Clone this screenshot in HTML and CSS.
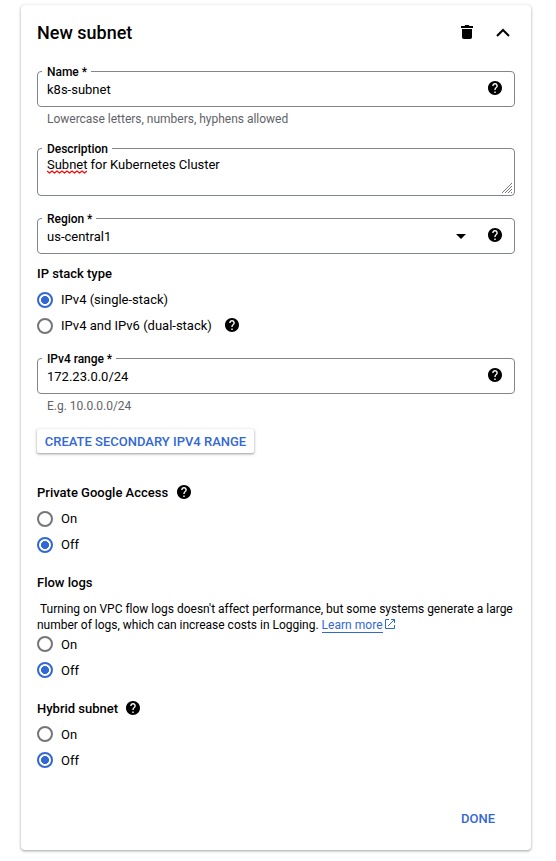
FILE: index.html
```html
<!DOCTYPE html>
<html lang="en">
<head>
<meta charset="utf-8">
<title>New subnet</title>
<link rel="stylesheet" href="styles.css">
</head>
<body>
<svg class="defs" width="0" height="0" aria-hidden="true">
  <symbol id="help" viewBox="2 2 20 20"><path d="M12 2C6.480 2 2 6.480 2 12s4.480 10 10 10 10-4.480 10-10S17.520 2 12 2zm1 17h-2v-2h2v2zm2.070-7.750l-.9.920C13.450 12.900 13 13.500 13 15h-2v-.5c0-1.100.45-2.100 1.170-2.830l1.240-1.260c.37-.36.59-.86.59-1.410 0-1.100-.9-2-2-2s-2 .9-2 2H8c0-2.210 1.790-4 4-4s4 1.790 4 4c0 .88-.36 1.680-.93 2.250z"/></symbol>
</svg>
<main class="card">
  <header class="header">
    <h1 class="title">New subnet</h1>
    <svg class="trash" width="12" height="14" viewBox="0 0 12 14"><path d="M1 4h10v8.200a1.800 1.800 0 0 1-1.800 1.800H2.800A1.800 1.800 0 0 1 1 12.200zM0 1h3.500l.8-1h3.400l.8 1H12v2H0z"/></svg>
    <svg class="chevron" width="14" height="9" viewBox="0 0 14 9"><path d="M1 8l6-6 6 6" fill="none" stroke="#000" stroke-width="2"/></svg>
  </header>

  <div class="field">
    <span class="label">Name *</span>
    <span class="value">k8s-subnet</span>
    <svg class="help"><use href="#help"/></svg>
  </div>
  <p class="hint">Lowercase letters, numbers, hyphens allowed</p>

  <div class="field area">
    <span class="label">Description</span>
    <span class="value"><span class="misspelled">Subnet<svg class="squiggle" width="40" height="4" viewBox="0 0 40 4"><path d="M0 1l2.500 2L5 1l2.500 2L10 1l2.500 2L15 1l2.500 2L20 1l2.500 2L25 1l2.500 2L30 1l2.500 2L35 1l2.500 2L40 1" fill="none" stroke="#f00" stroke-width="1.300"/></svg></span> for Kubernetes Cluster</span>
    <svg class="grip" width="10" height="10" viewBox="0 0 10 10"><path d="M0 10L10 0M3 10l7-7M6 10l4-4M9 10l1-1" stroke="#666" stroke-width=".9"/></svg>
  </div>

  <div class="field region">
    <span class="label">Region *</span>
    <span class="value">us-central1</span>
    <svg class="caret" width="10" height="5" viewBox="0 0 10 5"><path d="M0 0h10L5 5z"/></svg>
    <svg class="help"><use href="#help"/></svg>
  </div>

  <h2 class="heading stack-heading">IP stack type</h2>
  <div class="radios stack-radios">
    <div class="option"><i class="radio on"></i>IPv4 (single-stack)</div>
    <div class="option"><i class="radio"></i>IPv4 and IPv6 (dual-stack)<svg class="help"><use href="#help"/></svg></div>
  </div>

  <div class="field range">
    <span class="label">IPv4 range *</span>
    <span class="value">172.23.0.0/24</span>
    <svg class="help"><use href="#help"/></svg>
  </div>
  <p class="hint">E.g. 10.0.0.0/24</p>
  <button class="create">CREATE SECONDARY IPV4 RANGE</button>

  <h2 class="heading access-heading">Private Google Access<svg class="help"><use href="#help"/></svg></h2>
  <div class="radios access-radios">
    <div class="option"><i class="radio"></i>On</div>
    <div class="option"><i class="radio on"></i>Off</div>
  </div>

  <h2 class="heading logs-heading">Flow logs</h2>
  <p class="note">&nbsp;Turning on VPC flow logs doesn't affect performance, but some systems generate a large<br>number of logs, which can increase costs in Logging. <a class="link">Learn more</a><svg class="external" width="10" height="10" viewBox="0 0 10 10"><path d="M4 .5H.5v9h9V6M6 .5h3.500V4M9.500.5L3 7" fill="none" stroke="#3367d6"/></svg></p>
  <div class="radios logs-radios">
    <div class="option"><i class="radio"></i>On</div>
    <div class="option"><i class="radio on"></i>Off</div>
  </div>

  <h2 class="heading hybrid-heading">Hybrid subnet<svg class="help"><use href="#help"/></svg></h2>
  <div class="radios hybrid-radios">
    <div class="option"><i class="radio"></i>On</div>
    <div class="option"><i class="radio on"></i>Off</div>
  </div>

  <footer class="footer"><button class="done">DONE</button></footer>
</main>
</body>
</html>
```
FILE: styles.css
```css
* { box-sizing: border-box; }
body {
  margin: 0;
  padding: 5px 25px 0 21px;
  min-height: 861px;
  background: #fff;
  color: #000;
  font: 400 13px/20px Roboto, sans-serif;
}
h1, h2, p { margin: 0; }
svg { flex: none; }
button {
  border: 0;
  background: #fff;
  color: #3367d6;
  font: 500 13px/20px Roboto, sans-serif;
}
.defs { position: absolute; }
.card {
  display: flex;
  flex-direction: column;
  height: 845px;
  padding: 0 16px;
  border-radius: 4px;
  box-shadow: 0 1px 2px rgba(60, 64, 67, .3), 0 1px 3px 1px rgba(60, 64, 67, .15);
}
.header {
  display: flex;
  align-items: center;
  height: 56px;
}
.title {
  font-size: 18px;
  line-height: 24px;
  font-weight: 500;
  flex: 1;
}
.trash { margin-top: -2px; }
.chevron { margin: -1px 5px 0 23px; }
.help { width: 14px; height: 14px; }
.field {
  position: relative;
  display: flex;
  align-items: center;
  flex: none;
  height: 36px;
  margin-top: 10px;
  padding: 0 12px 0 9px;
  border: 1px solid #80868b;
  border-radius: 4px;
}
.field .help { margin-top: -2px; }
.label {
  position: absolute;
  top: -8px;
  left: 4px;
  padding: 0 4px 0 5px;
  background: #fff;
  font-size: 12px;
  line-height: 16px;
  font-weight: 500;
  letter-spacing: -.04px;
}
.value {
  flex: 1;
  padding-top: 2px;
}
.hint {
  margin: 4px 0 0 10px;
  color: #5f6368;
  font-size: 12px;
  line-height: 16px;
  letter-spacing: -.012px;
}
.area {
  height: 48px;
  margin-top: 21px;
  padding: 6px 2px 2px 9px;
  align-items: flex-start;
}
.area .value {
  padding-top: 0;
  letter-spacing: -.02px;
}
.grip { align-self: flex-end; }
.misspelled { position: relative; }
.squiggle {
  position: absolute;
  left: 0;
  bottom: -2px;
}
.region { margin-top: 22px; }
.caret { margin: 0 22px 0 0; }
.heading {
  display: flex;
  align-items: center;
  height: 20px;
  font-size: 13px;
  font-weight: 500;
}
.heading .help { margin: -2px 0 0 9px; }
.stack-heading { margin-top: 10px; }
.stack-radios { margin-top: 3px; }
.option {
  display: flex;
  align-items: center;
  height: 26px;
}
.option .help { margin: -2px 0 0 13px; }
.radio {
  flex: none;
  width: 16px;
  height: 16px;
  margin-right: 8px;
  border: 2px solid #757575;
  border-radius: 50%;
}
.radio.on {
  border-color: #3367d6;
  background: radial-gradient(circle, #3367d6 3.700px, transparent 4.300px);
}
.range { margin-top: 19px; }
.create {
  align-self: flex-start;
  width: 217px;
  height: 24px;
  margin-top: 15px;
  padding: 2px 0 0;
  border-radius: 2px;
  white-space: nowrap;
  box-shadow: 0 1px 2px rgba(60, 64, 67, .35), 0 1px 3px 1px rgba(60, 64, 67, .15);
}
.access-heading { margin-top: 30px; }
.access-radios { margin-top: 3px; }
.logs-heading { margin-top: 15px; }
.note {
  margin-top: 8px;
  font-size: 12px;
  line-height: 16px;
  letter-spacing: -.01px;
  white-space: nowrap;
}
.link {
  color: #3367d6;
  border-bottom: 1px solid #3367d6;
  letter-spacing: .03px;
}
.external { margin-left: 2px; }
.logs-radios { margin-top: -1px; }
.logs-radios .radio, .hybrid-radios .radio { margin-top: -2px; }
.hybrid-heading { margin-top: 15px; }
.hybrid-heading .help { margin-left: 8px; }
.hybrid-radios { margin-top: 3px; }
.footer {
  display: flex;
  justify-content: flex-end;
  margin-top: 35px;
  padding-right: 20px;
}
.done { padding: 0; }
```
